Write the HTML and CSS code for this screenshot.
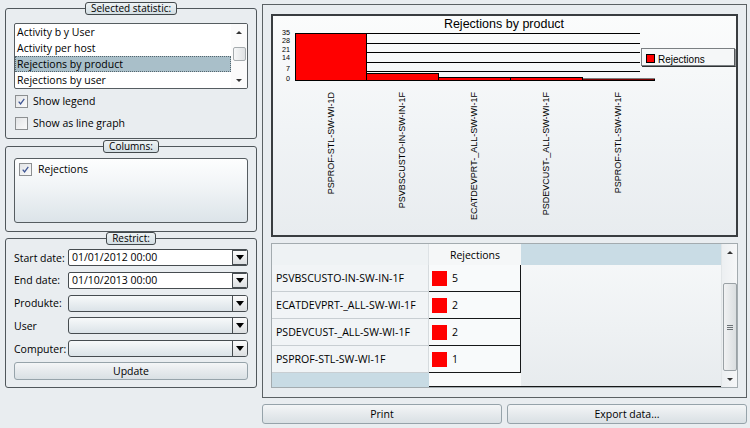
FILE: index.html
```html
<!DOCTYPE html>
<html>
<head>
<meta charset="utf-8">
<link rel="stylesheet" href="styles.css">
</head>
<body>
<div class="app">
  <div class="left">
    <fieldset class="group g-stat">
      <legend>Selected statistic:</legend>
      <div class="listbox">
        <ul class="items">
          <li>Activity b y User</li>
          <li>Activity per host</li>
          <li class="sel">Rejections by product</li>
          <li>Rejections by user</li>
        </ul>
        <div class="lscroll">
          <span class="sarrow up"></span>
          <span class="sthumb-top"></span>
          <span class="sthumb"></span>
          <span class="sfill"></span>
          <span class="sarrow down"></span>
        </div>
      </div>
      <label class="check first"><span class="box"><svg viewBox="0 0 13 13"><path d="M3.2 6.6 L5.4 9.4 L9.8 3.4" /></svg></span>Show legend</label>
      <label class="check second"><span class="box"></span>Show as line graph</label>
    </fieldset>

    <fieldset class="group g-cols">
      <legend>Columns:</legend>
      <div class="colbox">
        <label class="check"><span class="box"><svg viewBox="0 0 13 13"><path d="M3.2 6.6 L5.4 9.4 L9.8 3.4" /></svg></span>Rejections</label>
      </div>
    </fieldset>

    <fieldset class="group g-restrict">
      <legend>Restrict:</legend>
      <div class="form">
        <div class="row"><span class="lbl">Start date:</span><span class="combo text"><span class="val">01/01/2012 00:00</span><span class="drop"><i></i></span></span></div>
        <div class="row"><span class="lbl">End date:</span><span class="combo text"><span class="val">01/10/2013 00:00</span><span class="drop"><i></i></span></span></div>
        <div class="row"><span class="lbl">Produkte:</span><span class="combo empty"><span class="val"></span><span class="drop"><i></i></span></span></div>
        <div class="row"><span class="lbl">User</span><span class="combo empty"><span class="val"></span><span class="drop"><i></i></span></span></div>
        <div class="row"><span class="lbl">Computer:</span><span class="combo empty"><span class="val"></span><span class="drop"><i></i></span></span></div>
      </div>
      <button class="btn update">Update</button>
    </fieldset>
  </div>

  <div class="right">
    <div class="frame">
      <div class="chart">
        <svg viewBox="273 16 463 219" width="463" height="219">
          <text class="title" x="504" y="28" text-anchor="middle">Rejections by product</text>
          <g class="grid">
            <line x1="366" y1="33.5" x2="640" y2="33.5"/>
            <line x1="366" y1="43.5" x2="640" y2="43.5"/>
            <line x1="366" y1="52.5" x2="640" y2="52.5"/>
            <line x1="366" y1="62.5" x2="640" y2="62.5"/>
            <line x1="366" y1="71.5" x2="640" y2="71.5"/>
          </g>
          <g class="ylab">
            <text x="290" y="34.5" text-anchor="end" textLength="8" lengthAdjust="spacingAndGlyphs">35</text>
            <text x="290" y="43" text-anchor="end" textLength="8" lengthAdjust="spacingAndGlyphs">28</text>
            <text x="290" y="51.5" text-anchor="end" textLength="8" lengthAdjust="spacingAndGlyphs">21</text>
            <text x="290" y="60" text-anchor="end" textLength="8" lengthAdjust="spacingAndGlyphs">14</text>
            <text x="290" y="70.5" text-anchor="end" textLength="4" lengthAdjust="spacingAndGlyphs">7</text>
            <text x="290" y="81" text-anchor="end" textLength="4" lengthAdjust="spacingAndGlyphs">0</text>
          </g>
          <g class="bars">
            <rect x="295.5" y="33.5" width="71" height="47"/>
            <rect x="366.5" y="73.5" width="72" height="7"/>
            <rect x="438.5" y="77.5" width="72" height="3"/>
            <rect x="510.5" y="77.5" width="72" height="3"/>
            <rect x="582.5" y="79" width="72" height="1.5"/>
          </g>
          <g class="xlab">
            <text transform="translate(333.5,92) rotate(-90)" text-anchor="end">PSPROF-STL-SW-WI-1D</text>
            <text transform="translate(405.2,92) rotate(-90)" text-anchor="end">PSVBSCUSTO-IN-SW-IN-1F</text>
            <text transform="translate(477,92) rotate(-90)" text-anchor="end">ECATDEVPRT-_ALL-SW-WI-1F</text>
            <text transform="translate(548.6,92) rotate(-90)" text-anchor="end">PSDEVCUST-_ALL-SW-WI-1F</text>
            <text transform="translate(621.3,92) rotate(-90)" text-anchor="end">PSPROF-STL-SW-WI-1F</text>
          </g>
          <g class="legend">
            <rect class="lbox" x="641.5" y="48.5" width="93" height="17"/>
            <line class="lsh" x1="735" y1="49" x2="735" y2="67"/>
            <line class="lsh" x1="642" y1="66.5" x2="735.5" y2="66.5"/>
            <rect class="lsw" x="646.5" y="54.5" width="8" height="8"/>
            <text x="658" y="62.5">Rejections</text>
          </g>
        </svg>
      </div>
      <div class="table">
        <div class="c h1"></div>
        <div class="c h2">Rejections</div>
        <div class="c h3"></div>
        <div class="tscroll">
          <span class="sarrow up"></span>
          <span class="tgap"></span>
          <span class="tthumb"><i></i><i></i><i></i></span>
          <span class="sfill"></span>
          <span class="sarrow down"></span>
        </div>

        <div class="c rh">PSVBSCUSTO-IN-SW-IN-1F</div>
        <div class="c vc"><span class="sw"></span>5</div>
        <div class="c fl"></div>

        <div class="c rh">ECATDEVPRT-_ALL-SW-WI-1F</div>
        <div class="c vc"><span class="sw"></span>2</div>
        <div class="c fl"></div>

        <div class="c rh">PSDEVCUST-_ALL-SW-WI-1F</div>
        <div class="c vc"><span class="sw"></span>2</div>
        <div class="c fl"></div>

        <div class="c rh">PSPROF-STL-SW-WI-1F</div>
        <div class="c vc"><span class="sw"></span>1</div>
        <div class="c fl"></div>

        <div class="c b1"></div>
        <div class="c b2"></div>
        <div class="c b3"></div>
      </div>
    </div>
    <div class="actions">
      <button class="btn">Print</button>
      <button class="btn">Export data...</button>
    </div>
  </div>
</div>
</body>
</html>
```

FILE: styles.css
```css
* { box-sizing: border-box; }

body {
  margin: 0;
  width: 750px;
  height: 428px;
  overflow: hidden;
  background: #e9edf0;
  font-family: "Open Sans", "Noto Sans", sans-serif;
  font-size: 10.5px;
  color: #000;
}

.app {
  display: flex;
  gap: 5px;
  padding: 2px 3px 0 5px;
  height: 428px;
}

/* ---------- left column ---------- */
.left {
  width: 252px;
  display: flex;
  flex-direction: column;
}

.group {
  margin: 0;
  padding: 0 8px;
  border: 1px solid #50575b;
  border-radius: 3px;
  min-width: 0;
}

.group legend {
  margin: 0 auto;
  padding: 0 5px;
  height: 13px;
  line-height: 11px;
  font-size: 10px;
  border: 1px solid #43494c;
  border-radius: 3px;
  background: linear-gradient(#edf2f4, #d3dee3);
}

.g-stat { padding-top: 8px; padding-bottom: 7px; }
.g-cols { margin-top: 1px; padding-top: 5px; padding-bottom: 8px; }
.g-restrict { padding-top: 4px; padding-bottom: 7px; }

.listbox {
  height: 66px;
  border: 1px solid #565d61;
  border-radius: 2px;
  background: #fff;
  display: flex;
  overflow: hidden;
}

.items {
  flex: 1;
  margin: 0;
  padding: 0;
  list-style: none;
}

.items li {
  height: 16px;
  line-height: 16px;
  padding-left: 2px;
  white-space: nowrap;
}

.items li.sel {
  background: #a9bfc9;
  outline: 1px dotted #55666e;
  outline-offset: -1px;
}

.lscroll {
  width: 16px;
  display: flex;
  flex-direction: column;
  align-items: center;
  background: #fbfbfb;
}

.sarrow {
  height: 16px;
  width: 100%;
  flex: none;
  display: flex;
  align-items: center;
  justify-content: center;
}

.sarrow::after {
  content: "";
  border-left: 3px solid transparent;
  border-right: 3px solid transparent;
}

.sarrow.up::after { border-bottom: 3px solid #333; }
.sarrow.down::after { border-top: 3px solid #333; }

.lscroll .sthumb-top { height: 7px; flex: none; }

.lscroll .sthumb {
  width: 13px;
  height: 14px;
  flex: none;
  border: 1px solid #a5abae;
  border-radius: 2px;
  background: linear-gradient(90deg, #f6f7f8, #dfe2e4);
}

.sfill { flex: 1; }

.check {
  display: flex;
  align-items: center;
  gap: 5px;
  height: 16px;
  white-space: nowrap;
}

.check.first { margin-top: 4px; }
.check.second { margin-top: 6px; }

.box {
  width: 13px;
  height: 13px;
  margin-left: 1px;
  border: 1px solid #8c8f91;
  background: linear-gradient(135deg, #e2e4e6, #fafafa);
  display: block;
  flex: none;
}

.box svg {
  display: block;
  width: 11px;
  height: 11px;
}

.box svg path {
  fill: none;
  stroke: #3f5694;
  stroke-width: 1.5;
}

.colbox {
  height: 65px;
  border: 1px solid #565d61;
  border-radius: 3px;
  background: linear-gradient(#fdfefe, #f2f5f7 40%, #dce4e9);
  padding: 1px 3px;
}

.colbox .check { gap: 6px; margin-top: 1px; }

.form {
  display: flex;
  flex-direction: column;
  gap: 5.75px;
}

.row {
  display: flex;
  align-items: center;
  height: 17px;
}

.lbl {
  width: 54px;
  flex: none;
  white-space: nowrap;
}

.combo {
  width: 180px;
  height: 17px;
  display: flex;
  border: 1px solid #464c50;
  border-radius: 2px;
  overflow: hidden;
}

.combo.text { background: #fff; }
.combo.empty {
  border-radius: 3px;
  background: linear-gradient(#f7f9fa, #dbe3e8);
}

.combo .val {
  flex: 1;
  padding-left: 3px;
  line-height: 15px;
  white-space: nowrap;
}

.combo .drop {
  width: 15px;
  flex: none;
  border-left: 1px solid #464c50;
  background: linear-gradient(#fbfbfb, #dcdfe1);
  display: flex;
  align-items: center;
  justify-content: center;
}

.combo.text .drop {
  border: 1px solid #464c50;
  border-right: 0;
  border-radius: 1px;
}

.combo .drop i {
  border-left: 4px solid transparent;
  border-right: 4px solid transparent;
  border-top: 5px solid #000;
}

.btn {
  font-family: inherit;
  font-size: inherit;
  color: #000;
  padding: 0;
  border: 1px solid #96a3aa;
  border-radius: 3px;
  background: linear-gradient(#f4f6f7, #e6eaed 50%, #d9e0e4);
  text-align: center;
}

.update {
  display: block;
  width: 100%;
  height: 18px;
  margin-top: 5px;
}

/* ---------- right column ---------- */
.right {
  width: 485px;
  margin-top: 2px;
  display: flex;
  flex-direction: column;
}

.frame {
  height: 394px;
  border: 1px solid #5b6164;
  padding: 9px 8px 8px;
  display: flex;
  flex-direction: column;
  gap: 6px;
}

.chart {
  height: 223px;
  border: 2px solid #393d40;
  background: linear-gradient(#fbfcfc, #f1f4f6 50%, #e8ecef);
}

.chart svg { display: block; }

.chart text {
  font-family: "Liberation Sans", Arial, sans-serif;
  fill: #000;
}

.chart .title { font-size: 12.5px; }
.chart .ylab text { font-size: 7.5px; }
.chart .xlab text { font-size: 9px; }
.chart .legend text { font-size: 10px; }

.grid line { stroke: #000; stroke-width: 1; }

.bars rect {
  fill: #ff0000;
  stroke: #000;
  stroke-width: 1;
}

.legend .lbox { fill: #f5f7f8; stroke: #7a7f82; stroke-width: 1; }
.legend .lsh { stroke: #2f3335; stroke-width: 1; }
.legend .lsw { fill: #ff0000; stroke: #000; stroke-width: 1; }

.table {
  height: 145px;
  border: 1px solid #a3abaf;
  display: grid;
  grid-template-columns: 157px 92px 200px 16px;
  grid-template-rows: 21px repeat(4, 27px) 1fr;
  background: linear-gradient(#f7f9fa, #eef1f3 60%, #e7ebee);
}

.c { min-width: 0; }

.h1 {
  background: #eef2f4;
  border-right: 1px solid #dde2e5;
}

.h2 {
  background: #f5f7f8;
  display: flex;
  align-items: center;
  justify-content: center;
  padding-top: 1px;
}

.h3 { background: #c9dce5; }

.rh {
  display: flex;
  align-items: center;
  padding-left: 4px;
  background: #f1f4f6;
  border-bottom: 1px solid #c8ced2;
  border-right: 1px solid #d6dbde;
  white-space: nowrap;
  font-size: 10.6px;
}

.vc {
  display: flex;
  align-items: center;
  padding-left: 3px;
  background: #f8fafb;
  border-bottom: 1px solid #161819;
  border-right: 1px solid #161819;
}

.sw {
  width: 15px;
  height: 15px;
  background: #ff0000;
  margin-right: 5px;
  flex: none;
}

.b1 { background: #c8dbe4; }
.b2 {
  background: #f8fafb;
  border-bottom: 1px solid #161819;
}
.b3 { border-bottom: 1px solid #161819; }

.tscroll {
  grid-column: 4;
  grid-row: 1 / -1;
  display: flex;
  flex-direction: column;
  align-items: center;
  background: linear-gradient(90deg, #eceff1, #f6f7f8);
  border-left: 1px solid #e1e5e7;
}

.tscroll .tgap { height: 23px; flex: none; }

.tthumb {
  width: 14px;
  height: 88px;
  flex: none;
  border: 1px solid #9aa1a5;
  border-radius: 2px;
  background: linear-gradient(90deg, #f1f2f3, #dadee0);
  display: flex;
  flex-direction: column;
  align-items: center;
  justify-content: center;
  gap: 1px;
}

.tthumb i {
  display: block;
  width: 6px;
  height: 1px;
  background: #6c7276;
}

.actions {
  display: flex;
  gap: 5px;
  margin-top: 6px;
}

.actions .btn {
  flex: 1;
  height: 20px;
}
```
